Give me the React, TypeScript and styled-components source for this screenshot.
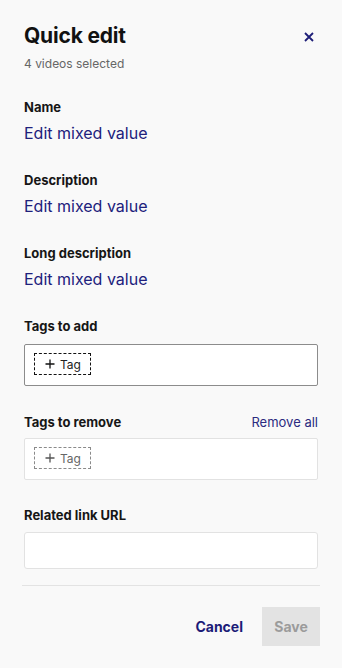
import React from "react";
import styled, { createGlobalStyle } from "styled-components";

const Global = createGlobalStyle`
  html, body { margin: 0; padding: 0; background: #f9f9f9; }
  body { font-family: Inter, "Noto Sans", sans-serif; -webkit-font-smoothing: antialiased; }
  * { box-sizing: border-box; }
`;

const Panel = styled.div`
  width: 342px;
  height: 668px;
  background: #f9f9f9;
  padding: 22px 24px 0 24px;
  display: flex;
  flex-direction: column;
`;

const Header = styled.div`
  display: flex;
  justify-content: space-between;
  align-items: flex-start;
`;

const Title = styled.h1`
  margin: 0;
  font-size: 21px;
  line-height: 28px;
  font-weight: 700;
  color: #111;
  letter-spacing: -0.2px;
`;

const Close = styled.button`
  border: 0;
  background: transparent;
  padding: 0;
  margin: 6px 0 0 0;
  width: 18px;
  height: 18px;
  display: flex;
  align-items: center;
  justify-content: center;
  cursor: pointer;
`;

const Sub = styled.div`
  font-size: 12px;
  line-height: 16px;
  color: #666;
  margin-top: 6px;
`;

const Section = styled.div<{ $mt: number }>`
  margin-top: ${(p) => p.$mt}px;
  display: flex;
  flex-direction: column;
`;

const LabelRow = styled.div`
  display: flex;
  justify-content: space-between;
  align-items: baseline;
`;

const Label = styled.div`
  font-size: 13px;
  line-height: 18px;
  font-weight: 700;
  color: #161616;
`;

const LinkText = styled.a`
  font-size: 16px;
  line-height: 22px;
  color: #20207c;
  text-decoration: none;
  margin-top: 6px;
  cursor: pointer;
`;

const SmallLink = styled.a`
  font-size: 13px;
  line-height: 18px;
  color: #2b2b80;
  cursor: pointer;
`;

const TagBox = styled.div<{ $strong?: boolean }>`
  margin-top: ${(p) => (p.$strong ? 9 : 7)}px;
  height: 42px;
  background: #fff;
  border: 1px solid ${(p) => (p.$strong ? "#8c8c8c" : "#e2e2e2")};
  border-radius: 2px;
  padding: 8px 9px;
  display: flex;
  align-items: flex-start;
`;

const TagChip = styled.button<{ $muted?: boolean }>`
  height: 22px;
  padding: 0 9px 0 10px;
  border: 1px dashed ${(p) => (p.$muted ? "#8a8a8a" : "#111")};
  background: transparent;
  display: flex;
  align-items: center;
  gap: 5px;
  font-family: inherit;
  font-size: 12px;
  color: ${(p) => (p.$muted ? "#666" : "#222")};
  cursor: pointer;
`;

const Input = styled.input`
  margin-top: 8px;
  height: 37px;
  width: 100%;
  border: 1px solid #e2e2e2;
  border-radius: 3px;
  background: #fff;
  font-family: inherit;
  outline: none;
`;

const Divider = styled.hr`
  margin: 16px -2px 0 -2px;
  border: 0;
  border-top: 1px solid #e3e3e3;
  height: 0;
`;

const Footer = styled.div`
  margin: 21px -2px 0 0;
  display: flex;
  justify-content: flex-end;
  align-items: center;
  gap: 19px;
`;

const CancelBtn = styled.button`
  border: 0;
  background: transparent;
  padding: 0;
  font-family: inherit;
  font-weight: 700;
  font-size: 14px;
  color: #1c1c78;
  cursor: pointer;
`;

const SaveBtn = styled.button`
  width: 58px;
  height: 39px;
  border: 0;
  background: #e3e3e3;
  font-family: inherit;
  font-weight: 700;
  font-size: 14px;
  color: #9b9b9b;
`;

const Plus = ({ color }: { color: string }) => (
  <svg width="10" height="10" viewBox="0 0 10 10">
    <path d="M5 0.5V9.5M0.5 5H9.5" stroke={color} strokeWidth="1.3" />
  </svg>
);

export default function App() {
  return (
    <>
      <Global />
      <Panel>
        <Header>
          <Title>Quick edit</Title>
          <Close aria-label="Close">
            <svg width="10" height="10" viewBox="0 0 10 10">
              <path d="M1 1L9 9M9 1L1 9" stroke="#1e1e78" strokeWidth="1.8" />
            </svg>
          </Close>
        </Header>
        <Sub>4 videos selected</Sub>

        <Section $mt={26}>
          <Label>Name</Label>
          <LinkText>Edit mixed value</LinkText>
        </Section>
        <Section $mt={27}>
          <Label>Description</Label>
          <LinkText>Edit mixed value</LinkText>
        </Section>
        <Section $mt={27}>
          <Label>Long description</Label>
          <LinkText>Edit mixed value</LinkText>
        </Section>

        <Section $mt={27}>
          <Label>Tags to add</Label>
          <TagBox $strong>
            <TagChip>
              <Plus color="#111" />
              Tag
            </TagChip>
          </TagBox>
        </Section>

        <Section $mt={27}>
          <LabelRow>
            <Label>Tags to remove</Label>
            <SmallLink>Remove all</SmallLink>
          </LabelRow>
          <TagBox>
            <TagChip $muted>
              <Plus color="#555" />
              Tag
            </TagChip>
          </TagBox>
        </Section>

        <Section $mt={26}>
          <Label>Related link URL</Label>
          <Input />
        </Section>

        <Divider />
        <Footer>
          <CancelBtn>Cancel</CancelBtn>
          <SaveBtn disabled>Save</SaveBtn>
        </Footer>
      </Panel>
    </>
  );
}
